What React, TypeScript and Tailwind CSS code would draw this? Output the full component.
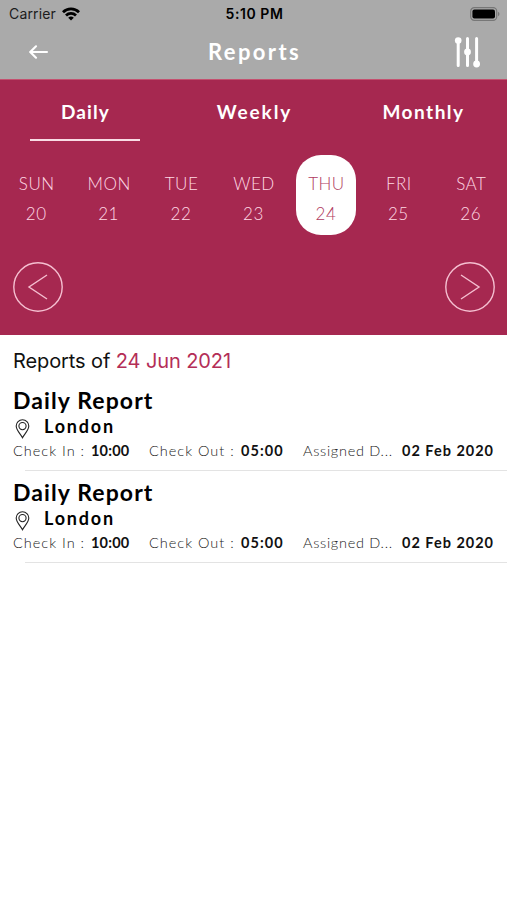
const tabs = [
  { name: 'Daily', spacing: 'tracking-[1.1px] pl-[2px]' },
  { name: 'Weekly', spacing: 'tracking-[1.9px] pl-[2px]' },
  { name: 'Monthly', spacing: 'tracking-[1.5px] pl-[2px]' },
];

const days = [
  { name: 'SUN', date: 20 },
  { name: 'MON', date: 21 },
  { name: 'TUE', date: 22 },
  { name: 'WED', date: 23 },
  { name: 'THU', date: 24 },
  { name: 'FRI', date: 25 },
  { name: 'SAT', date: 26 },
];

const reports = [
  { title: 'Daily Report', place: 'London', checkIn: '10:00', checkOut: '05:00', assigned: '02 Feb 2020' },
  { title: 'Daily Report', place: 'London', checkIn: '10:00', checkOut: '05:00', assigned: '02 Feb 2020' },
];

function StatusBar() {
  return (
    <div className="grid h-[27px] grid-cols-3 items-center pl-[9px] pr-[7px] font-['Inter',sans-serif] text-[14px] text-[#1c1c1c]">
      <div className="flex items-center gap-[6px]">
        <span className="tracking-[0.15px]">Carrier</span>
        <svg width="18" height="14" viewBox="0 0 18 14" fill="none" stroke="#000" strokeWidth="2.8">
          <path d="M1 5.2a11.4 11.4 0 0 1 16 0" />
          <path d="M4 8.4a7.2 7.2 0 0 1 10 0" />
          <path d="M9 13.6 6.2 10.8a4 4 0 0 1 5.6 0z" fill="#000" stroke="none" />
        </svg>
      </div>
      <span className="text-center font-semibold tracking-[0.55px] text-black">5:10 PM</span>
      <svg className="justify-self-end" width="30" height="14" viewBox="0 0 30 14">
        <rect x="0.7" y="0.7" width="26" height="12.6" rx="3.6" fill="none" stroke="#777" strokeWidth="1.2" />
        <rect x="2.4" y="2.4" width="22.6" height="9.2" rx="2" />
        <path d="M28 4.8c2 .8 2 3.6 0 4.4z" fill="#777" />
      </svg>
    </div>
  );
}

function Header() {
  return (
    <header className="h-[79px] bg-[#aaaaaa]">
      <StatusBar />
      <div className="grid h-[49px] grid-cols-[80px_1fr_80px] items-center text-white">
        <svg className="ml-[29px]" width="20" height="14" viewBox="0 0 20 14" fill="none" stroke="currentColor" strokeWidth="2.1" strokeLinecap="round">
          <path d="M18 7H1.5M7 1.3 1.3 7 7 12.7" />
        </svg>
        <h1 className="pl-[2px] text-center text-[22px] font-bold tracking-[2.4px]">Reports</h1>
        <svg className="ml-[27px] mt-px" width="26" height="32" viewBox="0 0 26 32" fill="currentColor" stroke="currentColor" strokeWidth="3" strokeLinecap="round">
          <path d="M4.2 4v25.5M13.5 2.5v27M22.6 2.5v25.5" />
          <g stroke="none">
            <circle cx="4.2" cy="4.6" r="3.3" />
            <circle cx="13.5" cy="16" r="3.4" />
            <circle cx="22.6" cy="28" r="3.4" />
          </g>
        </svg>
      </div>
    </header>
  );
}

function ArrowButton({ direction }: { direction: 'left' | 'right' }) {
  return (
    <button aria-label={direction}>
      <svg width="50" height="50" viewBox="0 0 50 50" fill="none" stroke="#f5bfd0" strokeWidth="1.4">
        <circle cx="25" cy="25" r="24.2" />
        <path d={direction === 'left' ? 'M34 13 16 25l18 12' : 'M16 13l18 12-18 12'} />
      </svg>
    </button>
  );
}

function Calendar() {
  return (
    <section className="h-[256px] border-t border-[#c4506f] bg-[#a62850]">
      <div className="grid h-[61px] grid-cols-3">
        {tabs.map((tab, index) => (
          <div key={tab.name} className="flex flex-col items-center">
            <span className={`mt-[17px] h-[42px] text-[19px] leading-[29px] font-bold text-white ${tab.spacing}`}>{tab.name}</span>
            {index === 0 && <div className="h-[1.5px] w-[110px] bg-[#f9dce5]"></div>}
          </div>
        ))}
      </div>
      <div className="mt-[14px] grid h-[81px] grid-cols-7">
        {days.map((day) => (
          <div
            key={day.name}
            className={
              day.date === 24
                ? 'mx-auto h-[80px] w-[60px] rounded-[25px] bg-white pt-[13px] text-center text-[#b03a60]'
                : 'mx-auto h-[80px] w-[60px] pt-[13px] text-center text-[#ffd9e4]'
            }
          >
            <div className="pl-px text-[17px] leading-[31px] font-light tracking-[0.5px]">{day.name}</div>
            <div className="text-[17px] leading-[30px] font-light tracking-[0.6px]">{day.date}</div>
          </div>
        ))}
      </div>
      <div className="mt-[26px] flex justify-between pl-[13px] pr-3">
        <ArrowButton direction="left" />
        <ArrowButton direction="right" />
      </div>
    </section>
  );
}

function PinIcon() {
  return (
    <svg className="mt-[3px]" width="15" height="20" viewBox="0 0 15 20" fill="none" stroke="#222" strokeWidth="1.1">
      <path d="M7.5 18.8C5.5 15 1.2 11.2 1.2 7.1a6.3 6.3 0 0 1 12.6 0c0 4.1-4.3 7.9-6.3 11.7z" />
      <circle cx="7.5" cy="7.1" r="3.6" />
    </svg>
  );
}

export default function App() {
  return (
    <div className="h-[900px] w-[507px] overflow-hidden bg-white font-['Lato',sans-serif]">
      <Header />
      <Calendar />
      <main>
        <h2 className="h-[49px] pl-[13px] pt-[11px] font-['Inter',sans-serif] text-[20px] leading-[30px] tracking-[-0.1px] text-[#111]">
          Reports of <span className="text-[#b42e57]">24 Jun 2021</span>
        </h2>
        {reports.map((report, index) => (
          <article key={index} className="h-[92px]">
            <h3 className="pl-[13px] text-[23px] leading-[32px] font-bold tracking-[1.1px] text-black">{report.title}</h3>
            <div className="flex h-[23px] pl-[15px]">
              <PinIcon />
              <span className="ml-[14px] text-[18px] leading-[20px] font-bold tracking-[1.8px] text-black">{report.place}</span>
            </div>
            <div className="grid h-[31px] grid-cols-[78px_58px_92px_62px_99px_1fr] pl-[13px] text-[14.5px] leading-[23px] whitespace-nowrap">
              <span className="font-light tracking-[1px] text-[#222]">Check In :</span>
              <b className="tracking-[0.2px] text-[#111]">{report.checkIn}</b>
              <span className="font-light tracking-[1px] text-[#222]">Check Out :</span>
              <b className="tracking-[1.1px] text-[#111]">{report.checkOut}</b>
              <span className="font-light tracking-[0.7px] text-[#222]">Assigned D...</span>
              <b className="tracking-[1px] text-[#111]">{report.assigned}</b>
            </div>
            <div className="ml-[25px] h-px bg-[#e3e3e3]"></div>
          </article>
        ))}
      </main>
    </div>
  );
}
